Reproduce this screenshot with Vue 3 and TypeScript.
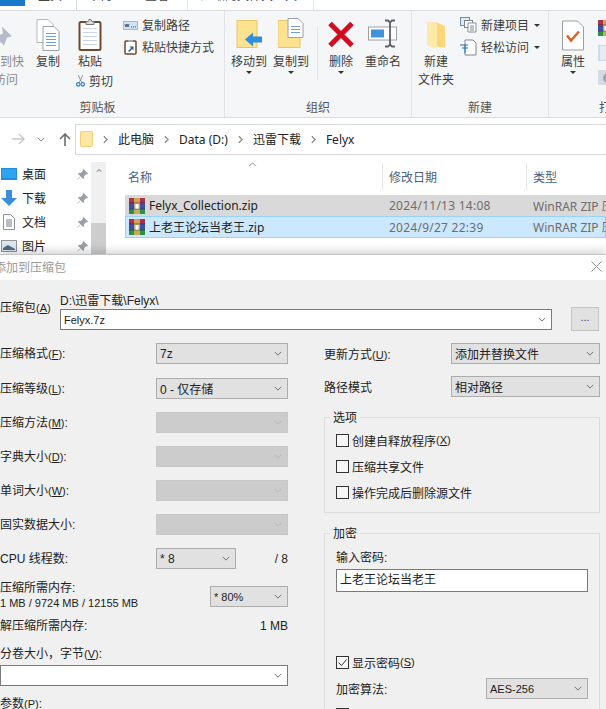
<script setup lang="ts">
interface FormRow {
  label: string
  hotkey?: string
  after?: string
  value?: string
  disabled?: boolean
  small?: boolean
}

const formRows: FormRow[] = [
  { label: '压缩格式', hotkey: 'F', after: ':', value: '7z' },
  { label: '压缩等级', hotkey: 'L', after: ':', value: '0 - 仅存储' },
  { label: '压缩方法', hotkey: 'M', after: ':', disabled: true },
  { label: '字典大小', hotkey: 'D', after: ':', disabled: true },
  { label: '单词大小', hotkey: 'W', after: ':', disabled: true },
  { label: '固实数据大小:', disabled: true },
  { label: 'CPU 线程数:', value: '* 8', small: true }
]

const crumbs = ['此电脑', 'Data (D:)', '迅雷下载', 'Felyx']

const navItems = [
  { name: '桌面', icon: 'desktop' },
  { name: '下载', icon: 'download' },
  { name: '文档', icon: 'doc' },
  { name: '图片', icon: 'picture' }
]

const files = [
  { name: 'Felyx_Collection.zip', date: '2024/11/13 14:08', active: false },
  { name: '上老王论坛当老王.zip', date: '2024/9/27 22:39', active: true }
]
</script>

<template>
  <div class="screen">
    <svg class="defs" aria-hidden="true">
      <symbol id="chev" viewBox="0 0 10 6">
        <path d="M1 1l4 4 4-4" fill="none" stroke="currentColor" stroke-width="1" />
      </symbol>
      <symbol id="crumb" viewBox="0 0 6 10">
        <path d="M1 1l4 4-4 4" fill="none" stroke="#8a8a8a" stroke-width="1.6" />
      </symbol>
      <symbol id="pin" viewBox="0 0 12 12">
        <path d="M7 0l5 5-1 1-1-.4-2.4 2.4.2 2-1 1L4 8.200 1 11.500.5 11 3.800 8 1 5.200l1-1 2 .2L6.400 2 6 1z" fill="#9aa0a6" />
      </symbol>
      <symbol id="rar" viewBox="0 0 16 16">
        <rect x="0" y="0" width="16" height="5" fill="#a8324a" />
        <rect x="0" y="5" width="16" height="6" fill="#3f4fa8" />
        <rect x="0" y="11" width="16" height="5" fill="#2f8f46" />
        <rect x="5" y="0" width="6" height="16" fill="#d8b65a" opacity=".85" />
        <rect x="6.500" y="6" width="3" height="5" fill="#fff" />
        <rect x="0" y="4.500" width="16" height=".8" fill="#222" opacity=".5" />
        <rect x="0" y="10.700" width="16" height=".8" fill="#222" opacity=".5" />
      </symbol>
    </svg>

    <section class="explorer">
      <div class="tabs">
        <span class="tab tab-file"></span>
        <span class="tab tab-home">主页</span>
        <span class="tab tab-share">共享</span>
        <span class="tab tab-view">查看</span>
        <span class="tab tab-tools">压缩的文件夹工具</span>
      </div>

      <div class="ribbon">
        <div class="group group-clip">
          <div class="group-body">
            <div class="big big-pin">
              <svg class="big-icon" width="30" height="34" viewBox="0 0 30 34">
                <path d="M17 8l10 10-5 1-3 8-9-9 8-3z" fill="#b4bccb" />
                <path d="M13 21l-6 8" stroke="#b4bccb" stroke-width="2" />
              </svg>
              <span class="big-text muted">固定到快<br />速访问</span>
            </div>
            <div class="big big-copy">
              <svg class="big-icon" width="26" height="34" viewBox="0 0 26 34">
                <path d="M2 1h11l5 5v18H2z" fill="#fff" stroke="#b5b9bf" />
                <path d="M8 8h11l5 5v19H8z" fill="#fff" stroke="#9aa0a8" />
                <path d="M11 15h10M11 18h10M11 21h10M11 24h10M11 27h10" stroke="#6f9fd8" />
              </svg>
              <span class="big-text">复制</span>
            </div>
            <div class="paste-col">
              <div class="big big-paste">
                <svg class="big-icon" width="24" height="34" viewBox="0 0 24 34">
                  <rect x="1.500" y="3.500" width="21" height="28" rx="1.500" fill="#fff" stroke="#6b4a32" stroke-width="2" />
                  <path d="M5 10h14M5 14h14M5 18h14M5 22h14M5 26h14" stroke="#c9d6e8" />
                  <path d="M8 6V3h2l1-2h2l1 2h2v3z" fill="#d9d9d9" stroke="#777" />
                </svg>
                <span class="big-text">粘贴</span>
              </div>
              <div class="cut">
                <svg width="12" height="16" viewBox="0 0 12 16">
                  <path d="M3 0l4.500 10M9 0L4.500 10" stroke="#8b8f96" stroke-width="1.200" fill="none" />
                  <circle cx="3" cy="12.500" r="2.300" fill="none" stroke="#2d7cc4" stroke-width="1.500" />
                  <circle cx="9" cy="12.500" r="2.300" fill="none" stroke="#2d7cc4" stroke-width="1.500" />
                </svg>
                <span>剪切</span>
              </div>
            </div>
            <div class="small-list small-clip">
              <div class="small">
                <svg width="15" height="9" viewBox="0 0 15 9">
                  <rect x=".5" y=".5" width="14" height="8" fill="#cfe3f6" stroke="#9cbbd8" />
                  <path d="M2 3l1 3 1-3 1 3 1-3" fill="none" stroke="#345" stroke-width=".8" />
                  <path d="M8 6h1M10 6h1M12 6h1" stroke="#345" />
                </svg>
                <span>复制路径</span>
              </div>
              <div class="small">
                <svg width="15" height="16" viewBox="0 0 15 16">
                  <rect x="2" y="2" width="11" height="13" rx="1" fill="#fff" stroke="#6b4a32" stroke-width="1.500" />
                  <rect x="5" y="1" width="5" height="2" fill="#aaa" />
                  <path d="M5 12l3-3-1.500-1.500H10.500V11.500L9 10l-2.500 3z" fill="#2f5f93" />
                </svg>
                <span>粘贴快捷方式</span>
              </div>
            </div>
          </div>
          <div class="group-label">剪贴板</div>
        </div>

        <div class="group group-org">
          <div class="group-body">
            <div class="big big-move">
              <svg class="big-icon" width="27" height="34" viewBox="0 0 27 34">
                <rect x="1" y="2" width="20" height="27" fill="#fde28f" stroke="#e8c76c" />
                <path d="M9 21l8-7v4h9v6h-9v4z" fill="#2f8fdc" />
              </svg>
              <span class="big-text">移动到</span>
              <i class="caret"></i>
            </div>
            <div class="big big-copyto">
              <svg class="big-icon" width="27" height="34" viewBox="0 0 27 34">
                <rect x="0" y="2" width="22" height="27" fill="#fde28f" stroke="#e8c76c" />
                <path d="M10 0h10l5 5v14H10z" fill="#fff" stroke="#9aa0a8" />
                <path d="M13 8h9M13 11h9M13 14h9" stroke="#6f9fd8" />
              </svg>
              <span class="big-text">复制到</span>
              <i class="caret"></i>
            </div>
            <i class="split"></i>
            <div class="big big-del">
              <svg class="big-icon" width="28" height="34" viewBox="0 0 28 34">
                <path d="M3 5l22 22M25 5L3 27" stroke="#d40b1d" stroke-width="5" />
              </svg>
              <span class="big-text">删除</span>
              <i class="caret"></i>
            </div>
            <div class="big big-rename">
              <svg class="big-icon" width="30" height="34" viewBox="0 0 30 34">
                <rect x=".5" y="8.500" width="28" height="13" fill="#fff" stroke="#9aa0a8" />
                <rect x="3" y="11" width="13" height="8" fill="#3d94dc" />
                <path d="M17 2h3l2 2 2-2h3M22 4v22M17 28h3l2-2 2 2h3" fill="none" stroke="#5d6268" stroke-width="1.800" />
              </svg>
              <span class="big-text">重命名</span>
            </div>
          </div>
          <div class="group-label">组织</div>
        </div>

        <div class="group group-new">
          <div class="group-body">
            <div class="big big-folder">
              <svg class="big-icon" width="22" height="34" viewBox="0 0 22 34">
                <path d="M2 4h10l8 4v21l-8-1-10-1z" fill="#fbd77a" />
                <path d="M2 4l10 1v25L2 27z" fill="#fdeaa8" />
              </svg>
              <span class="big-text">新建<br />文件夹</span>
            </div>
            <div class="small-list small-new">
              <div class="small">
                <svg width="17" height="16" viewBox="0 0 17 16">
                  <rect x=".5" y=".5" width="9" height="8" fill="#dcebf8" stroke="#6f8fae" />
                  <rect x="4.500" y="3.500" width="8" height="7" fill="#fff" stroke="#7b8794" />
                  <path d="M8 6h8v9H8z" fill="#fff" stroke="#8a9099" />
                  <path d="M10 9h4M10 11h4M10 13h4" stroke="#7b8794" />
                </svg>
                <span>新建项目</span>
                <i class="caret"></i>
              </div>
              <div class="small">
                <svg width="17" height="17" viewBox="0 0 17 17">
                  <path d="M5 1h8l3 3v12H5z" fill="#fff" stroke="#7b8794" />
                  <path d="M0 6h8M2 9h6M5 6v8" stroke="#1f6fb5" />
                </svg>
                <span>轻松访问</span>
                <i class="caret"></i>
              </div>
            </div>
          </div>
          <div class="group-label">新建</div>
        </div>

        <div class="group group-open">
          <div class="group-body">
            <div class="big big-prop">
              <svg class="big-icon" width="22" height="30" viewBox="0 0 22 30">
                <path d="M.5.5h15l6 6v23H.5z" fill="#fff" stroke="#9aa0a8" />
                <path d="M5 15l4 5 8-9" fill="none" stroke="#d9622b" stroke-width="2.500" />
              </svg>
              <span class="big-text">属性</span>
              <i class="caret"></i>
            </div>
            <div class="open-icons">
              <svg width="16" height="16"><use href="#rar" /></svg>
              <svg width="16" height="16" viewBox="0 0 16 16">
                <rect x="1" y="0" width="15" height="16" fill="#e4ecf6" stroke="#b9c4d2" />
              </svg>
              <svg width="16" height="15" viewBox="0 0 16 15">
                <rect x="0" y="0" width="16" height="15" fill="#d5dbe4" />
                <circle cx="10" cy="8" r="5" fill="#9aa5b4" />
              </svg>
            </div>
          </div>
          <div class="group-label">打开</div>
        </div>
      </div>

      <div class="nav">
        <div class="nav-arrows">
          <svg width="13" height="12" viewBox="0 0 13 12">
            <path d="M0 6h12M7 1l5 5-5 5" fill="none" stroke="#c9c9c9" stroke-width="1.500" />
          </svg>
          <svg class="nav-down" width="8" height="5"><use href="#chev" /></svg>
          <svg width="12" height="13" viewBox="0 0 12 13">
            <path d="M6 13V1M1 6l5-5 5 5" fill="none" stroke="#6d6d6d" stroke-width="1.600" />
          </svg>
        </div>
        <div class="address">
          <svg width="13" height="16" viewBox="0 0 13 16">
            <rect x=".5" y=".5" width="12" height="15" rx="1" fill="#fde7a3" stroke="#ecd07c" />
          </svg>
          <template v-for="crumb in crumbs" :key="crumb">
            <svg class="crumb-sep" width="5" height="9"><use href="#crumb" /></svg>
            <span class="crumb">{{ crumb }}</span>
          </template>
        </div>
      </div>

      <div class="content">
        <aside class="side">
          <ul class="side-list">
            <li v-for="item in navItems" :key="item.name" class="side-item">
              <svg v-if="item.icon === 'desktop'" width="16" height="12" viewBox="0 0 16 12">
                <rect width="16" height="12" fill="#1e8fe0" />
                <rect x="1" y="1" width="14" height="9" fill="#2ba3ee" />
              </svg>
              <svg v-else-if="item.icon === 'download'" width="16" height="16" viewBox="0 0 16 16">
                <path d="M5 0h6v8h5l-8 8-8-8h5z" fill="#3a8fdd" />
              </svg>
              <svg v-else-if="item.icon === 'doc'" width="16" height="16" viewBox="0 0 12 16">
                <path d="M.5.5h7l4 4v11H.5z" fill="#fff" stroke="#8f959c" />
                <path d="M3 6h6M3 8h6M3 10h6M3 12h6" stroke="#6f7f94" />
              </svg>
              <svg v-else width="16" height="12" viewBox="0 0 16 12">
                <rect x=".5" y=".5" width="15" height="11" fill="#dfe6ee" stroke="#8f959c" />
                <path d="M2 8l5-3 7 4v1H2z" fill="#4f6f86" />
              </svg>
              <span class="side-name">{{ item.name }}</span>
              <svg class="side-pin" width="11" height="11"><use href="#pin" /></svg>
            </li>
          </ul>
          <div class="side-scroll">
            <svg class="scroll-up" width="8" height="5" viewBox="0 0 10 6">
              <path d="M1 5l4-4 4 4" fill="none" stroke="#444" stroke-width="1.600" />
            </svg>
            <div class="scroll-thumb"></div>
          </div>
        </aside>

        <div class="files">
          <svg class="sort-mark" width="9" height="5" viewBox="0 0 10 6">
            <path d="M1 5l4-4 4 4" fill="none" stroke="#777" />
          </svg>
          <div class="files-head">
            <span class="head-cell">名称</span>
            <span class="head-cell head-sep">修改日期</span>
            <span class="head-cell head-sep">类型</span>
          </div>
          <div v-for="file in files" :key="file.name" class="file" :class="{ selected: file.active }">
            <span class="file-name">
              <svg width="16" height="16"><use href="#rar" /></svg>
              {{ file.name }}
            </span>
            <span class="file-meta file-date">{{ file.date }}</span>
            <span class="file-meta">WinRAR ZIP 压缩文件</span>
          </div>
        </div>
      </div>
    </section>

    <section class="dialog">
      <header class="dialog-title">
        <span class="title-text">添加到压缩包</span>
        <svg width="11" height="11" viewBox="0 0 11 11">
          <path d="M.5.5l10 10M10.500.5l-10 10" stroke="#8d8d8d" />
        </svg>
      </header>

      <div class="dialog-body">
        <div class="archive">
          <span class="archive-label">压缩包<span class="hk">(<u>A</u>)</span></span>
          <div class="archive-main">
            <span class="archive-path">D:\迅雷下载\Felyx\</span>
            <div class="combo combo-white">
              <span class="latin">Felyx.7z</span>
              <svg width="8" height="5"><use href="#chev" /></svg>
            </div>
          </div>
          <button class="browse" type="button">...</button>
        </div>

        <div class="columns">
          <div class="col">
            <div class="rows">
              <div v-for="(row, i) in formRows" :key="row.label" class="row" :class="{ 'row-first': i === 0 }">
                <span class="label">{{ row.label }}<span v-if="row.hotkey" class="hk">(<u>{{ row.hotkey }}</u>)</span>{{ row.after }}</span>
                <div class="combo" :class="{ 'combo-off': row.disabled, 'combo-cpu': row.small }">
                  <span>{{ row.value }}</span>
                  <svg width="8" height="5"><use href="#chev" /></svg>
                </div>
                <span v-if="row.small" class="cpu-total">/ 8</span>
              </div>
            </div>

            <div class="memory">
              <div class="memory-text">
                <div>压缩所需内存:</div>
                <div class="latin">1 MB / 9724 MB / 12155 MB</div>
              </div>
              <div class="combo combo-mem">
                <span class="latin">* 80%</span>
                <svg width="8" height="5"><use href="#chev" /></svg>
              </div>
            </div>

            <div class="line line-unpack">
              <span>解压缩所需内存:</span>
              <span>1 MB</span>
            </div>
            <div class="line line-split">分卷大小，字节<span class="hk">(<u>V</u>)</span>:</div>
            <div class="combo combo-white combo-split">
              <span></span>
              <svg width="8" height="5"><use href="#chev" /></svg>
            </div>
            <div class="line line-params">参数<span class="hk">(<u>P</u>)</span>:</div>
          </div>

          <div class="col col-right">
            <div class="row">
              <span>更新方式<span class="hk">(<u>U</u>)</span>:</span>
              <div class="combo combo-right">
                <span>添加并替换文件</span>
                <svg width="8" height="5"><use href="#chev" /></svg>
              </div>
            </div>
            <div class="row row-path">
              <span>路径模式</span>
              <div class="combo combo-right">
                <span>相对路径</span>
                <svg width="8" height="5"><use href="#chev" /></svg>
              </div>
            </div>

            <fieldset class="box box-options">
              <legend><span>选项</span></legend>
              <label class="check-row"><i class="check"></i>创建自释放程序<span class="hk">(<u>X</u>)</span></label>
              <label class="check-row"><i class="check"></i>压缩共享文件</label>
              <label class="check-row"><i class="check"></i>操作完成后删除源文件</label>
            </fieldset>

            <fieldset class="box box-crypt">
              <legend><span>加密</span></legend>
              <div class="pwd-label">输入密码:</div>
              <div class="pwd-input">上老王论坛当老王</div>
              <label class="check-row show-pwd">
                <i class="check">
                  <svg width="11" height="11" viewBox="0 0 11 11">
                    <path d="M1.500 5.500l3 3 5-6" fill="none" stroke="#333" />
                  </svg>
                </i>显示密码<span class="hk">(<u>S</u>)</span>
              </label>
              <div class="row row-algo">
                <span>加密算法:</span>
                <div class="combo combo-algo">
                  <span class="latin">AES-256</span>
                  <svg width="8" height="5"><use href="#chev" /></svg>
                </div>
              </div>
              <label class="check-row last-check"><i class="check"></i></label>
            </fieldset>
          </div>
        </div>
      </div>
    </section>
  </div>
</template>

<style scoped>
.screen {
  width: 606px;
  height: 709px;
  overflow: hidden;
  background: #fff;
  font-family: "Noto Sans", "Noto Sans CJK SC", sans-serif;
  font-size: 12px;
  color: #222;
}

.defs {
  position: absolute;
  width: 0;
  height: 0;
}

.explorer {
  height: 254px;
  overflow: hidden;
}

/* tabs are almost cut off by the top of the picture */
.tabs {
  display: flex;
  height: 10px;
  overflow: hidden;
  box-sizing: content-box;
  border-bottom: 1px solid #dadbdc;
  color: #444;
}

.tab {
  display: block;
  height: 14px;
  margin-top: -4px;
  box-sizing: border-box;
  line-height: 0;
  white-space: nowrap;
}

.tab-file {
  width: 25px;
  height: 6px;
  margin-top: 0;
  background: #1979ca;
}

.tab-home {
  width: 51px;
  padding-left: 12px;
  border-right: 1px solid #dadbdc;
  margin-left: 1px;
}

.tab-share {
  width: 52px;
  padding-left: 15px;
}

.tab-view {
  width: 59px;
  padding-left: 16px;
  border-right: 1px solid #e6e6e6;
}

.tab-tools {
  width: 126px;
  padding-left: 13px;
  border-right: 1px solid #e6e6e6;
}

.ribbon {
  display: flex;
  height: 107px;
  overflow: hidden;
  box-sizing: border-box;
  background: #f5f6f7;
  border-bottom: 1px solid #dadbdc;
  color: #3c3c3c;
}

.group {
  display: flex;
  flex: none;
  flex-direction: column;
  box-sizing: border-box;
  padding-top: 7px;
  border-right: 1px solid #e2e3e4;
}

.group-clip {
  width: 254px;
  margin-left: -29px;
}

.group-org {
  width: 187px;
}

.group-new {
  width: 137px;
}

.group-open {
  width: 124px;
  border-right: 0;
}

.group-body {
  display: flex;
  flex: 1;
  min-height: 0;
}

.group-label {
  height: 18px;
  line-height: 18px;
  text-align: center;
  color: #555;
}

.big {
  display: flex;
  flex: none;
  flex-direction: column;
  align-items: center;
}

.big-icon {
  flex: none;
  height: 35px;
}

.big-text {
  line-height: 18px;
  text-align: center;
  white-space: nowrap;
}

.muted {
  color: #8b8b8b;
}

.big-pin {
  width: 58px;
}

.big-copy {
  width: 38px;
}

.paste-col {
  width: 46px;
}

.big-paste {
  width: 46px;
}

.cut {
  display: flex;
  align-items: center;
  gap: 4px;
  height: 18px;
  margin-top: 1px;
  margin-left: 9px;
  white-space: nowrap;
}

.small-list {
  display: flex;
  flex-direction: column;
  gap: 4px;
  margin-top: -2px;
}

.small-clip {
  margin-left: 10px;
}

.small-new {
  margin-left: 6px;
}

.small {
  display: flex;
  align-items: center;
  gap: 4px;
  height: 18px;
  white-space: nowrap;
}

.caret {
  display: block;
  flex: none;
  width: 0;
  height: 0;
  border-top: 3px solid #333;
  border-left: 3px solid transparent;
  border-right: 3px solid transparent;
}

.small .caret {
  margin-left: 1px;
}

.big-move {
  width: 42px;
  margin-left: 3px;
}

.big-copyto {
  width: 42px;
}

.split {
  flex: none;
  width: 1px;
  height: 53px;
  margin: 9px 4px 0 5px;
  background: #e2e3e4;
}

.big-del {
  width: 36px;
  margin-left: 1px;
}

.big-rename {
  width: 36px;
  margin-left: 6px;
}

.big-folder {
  width: 36px;
  margin-left: 6px;
}

.big-prop {
  width: 36px;
  margin-left: 6px;
}

.open-icons {
  display: flex;
  flex-direction: column;
  gap: 9px;
  margin-left: 7px;
  padding-top: 2px;
}

.nav {
  display: flex;
  align-items: center;
  height: 42px;
  box-sizing: border-box;
}

.nav-arrows {
  display: flex;
  flex: none;
  align-items: center;
  width: 75px;
  padding-left: 12px;
  box-sizing: border-box;
}

.nav-down {
  margin: 0 14px 0 12px;
  color: #777;
}

.address {
  display: flex;
  flex: 1;
  align-items: center;
  height: 31px;
  box-sizing: border-box;
  padding-left: 4px;
  border: 1px solid #d9d9d9;
  border-right: 0;
}

.crumb-sep {
  margin: 0 10px;
}

.crumb {
  color: #222;
  white-space: nowrap;
}

.content {
  display: flex;
  height: 94px;
  overflow: hidden;
}

.side {
  display: flex;
  flex: none;
  width: 107px;
  box-sizing: border-box;
}

.side-list {
  flex: none;
  width: 91px;
  margin: 0;
  padding: 2px 0 0 1px;
  box-sizing: border-box;
  list-style: none;
}

.side-item {
  display: flex;
  align-items: center;
  height: 24px;
}

.side-name {
  margin-left: 5px;
  white-space: nowrap;
}

.side-pin {
  margin-left: auto;
  margin-right: 3px;
}

.side-scroll {
  flex: none;
  display: flex;
  flex-direction: column;
  align-items: center;
  width: 15px;
  margin-top: 2px;
  background: #f0f0f0;
}

.scroll-up {
  margin: 7px 0 0;
}

.scroll-thumb {
  align-self: stretch;
  height: 50px;
  margin-top: 51px;
  background: #cdcdcd;
}

.files {
  position: relative;
  flex: 1;
  margin-left: 18px;
  min-width: 0;
}

.sort-mark {
  position: absolute;
  top: 2px;
  left: 123px;
}

.files-head {
  display: grid;
  grid-template-columns: 257px 144px 1fr;
  height: 35px;
  padding-top: 2px;
  box-sizing: border-box;
  color: #4c607a;
}

.head-cell {
  display: flex;
  align-items: center;
  height: 27px;
  padding-left: 3px;
  margin-top: 1px;
}

.head-sep {
  padding-left: 6px;
  border-left: 1px solid #e5e5e5;
}

.file {
  display: grid;
  grid-template-columns: 257px 144px 1fr;
  align-items: center;
  height: 21px;
  background: #d9d9d9;
  white-space: nowrap;
}

.file.selected {
  height: 22px;
  background: #cce8ff;
  box-shadow: inset 0 0 0 1px #99d1ff;
}

.file-name {
  display: flex;
  align-items: center;
  gap: 4px;
  padding-left: 4px;
  color: #222;
}

.file-meta {
  padding-left: 7px;
  color: #6d6d6d;
}

.file-date {
  letter-spacing: 0.25px;
}

.dialog {
  position: relative;
  height: 455px;
  overflow: hidden;
  font-family: "Liberation Sans", "Noto Sans CJK SC", sans-serif;
  box-shadow: 0 -3px 9px rgba(0, 0, 0, 0.18);
  background: #f0f0f0;
}

.dialog-title {
  display: flex;
  align-items: center;
  justify-content: space-between;
  height: 26px;
  padding: 0 4px 2px 0;
  background: #fff;
  border-top: 1px solid #c4c4c4;
  box-sizing: border-box;
}

.title-text {
  margin-left: -6px;
  color: #9a9a9a;
}

.latin,
.hk {
  font-size: 11px;
}

.dialog-body {
  height: 429px;
  box-sizing: border-box;
  padding-top: 14px;
  overflow: hidden;
}

.archive {
  display: flex;
  height: 36px;
}

.archive-label {
  flex: none;
  width: 60px;
  margin-top: 5px;
  line-height: 18px;
}

.archive-main {
  flex: none;
  display: flex;
  flex-direction: column;
  width: 492px;
}

.archive-path {
  height: 15px;
  line-height: 15px;
}

.browse {
  flex: none;
  width: 28px;
  height: 24px;
  margin-top: 13px;
  margin-left: 19px;
  padding: 0 0 4px;
  border: 1px solid #c4c4c4;
  background: #e1e1e1;
  font-size: 11px;
  color: #444;
}

.columns {
  display: grid;
  grid-template-columns: 288px 276px;
  column-gap: 36px;
  margin-top: 13px;
}

.col {
  display: flex;
  flex-direction: column;
  min-width: 0;
}

.rows {
  display: flex;
  flex-direction: column;
  gap: 13px;
}

.row {
  display: flex;
  align-items: center;
  justify-content: space-between;
  height: 21px;
  white-space: nowrap;
}

.row-first {
  margin-bottom: 1px;
}

.label {
  flex: none;
  width: 156px;
  margin-top: -2px;
}

.combo {
  display: flex;
  flex: none;
  align-items: center;
  justify-content: space-between;
  width: 132px;
  height: 21px;
  padding: 0 5px 0 3px;
  box-sizing: border-box;
  border: 1px solid #adadad;
  background: #e1e1e1;
  color: #222;
  white-space: nowrap;
  overflow: hidden;
}

.combo svg {
  flex: none;
  color: #555;
}

.combo-white {
  width: 100%;
  border-color: #7a7a7a;
  background: #fff;
}

.combo-off {
  border-color: #c8c8c8;
  background: #cccccc;
}

.combo-off svg {
  color: #b0b0b0;
}

.combo-cpu {
  width: 80px;
}

.cpu-total {
  flex: none;
  width: 52px;
  text-align: right;
}

.memory {
  display: flex;
  justify-content: space-between;
  margin-top: 11px;
}

.memory-text {
  padding-top: 1px;
  line-height: 15px;
  white-space: nowrap;
}

.combo-mem {
  width: 78px;
  margin-top: 6px;
}

.line {
  display: flex;
  justify-content: space-between;
  line-height: 18px;
  white-space: nowrap;
}

.line-unpack {
  margin-top: 6px;
}

.line-split {
  display: block;
  margin-top: 10px;
}

.combo-split {
  margin-top: 2px;
}

.line-params {
  display: block;
  margin-top: 9px;
}

.col-right .row-path {
  margin-top: 12px;
}

.combo-right {
  width: 149px;
}

.box {
  display: block;
  min-width: 0;
  margin: 12px 0 0;
  padding: 0 11px;
  border: 1px solid #dcdcdc;
  box-sizing: border-box;
}

.box-options {
  height: 104px;
}

.box-crypt {
  height: 200px;
}

legend {
  margin-left: -6px;
  padding: 0 3px;
  line-height: 16px;
}

/* legend text sits a pixel below the middle of the frame line */
legend span {
  position: relative;
  top: 1px;
}

.check-row {
  display: flex;
  align-items: center;
  height: 26px;
  white-space: nowrap;
}

.box-options .check-row:first-of-type {
  margin-top: 2px;
}

.check {
  display: flex;
  flex: none;
  align-items: center;
  justify-content: center;
  width: 13px;
  height: 13px;
  margin-right: 3px;
  box-sizing: border-box;
  border: 1px solid #333;
  background: #f6f6f6;
}

.pwd-label {
  margin-top: 8px;
  line-height: 18px;
}

.pwd-input {
  height: 23px;
  margin-top: 2px;
  padding-left: 3px;
  box-sizing: border-box;
  border: 1px solid #7a7a7a;
  background: #fff;
  line-height: 21px;
}

.show-pwd {
  margin-top: 57px;
}

.row-algo {
  margin-top: 3px;
}

.combo-algo {
  width: 102px;
}

.last-check {
  margin-top: 2px;
}
</style>

<style>
html,
body {
  margin: 0;
  background: #fff;
}
</style>
